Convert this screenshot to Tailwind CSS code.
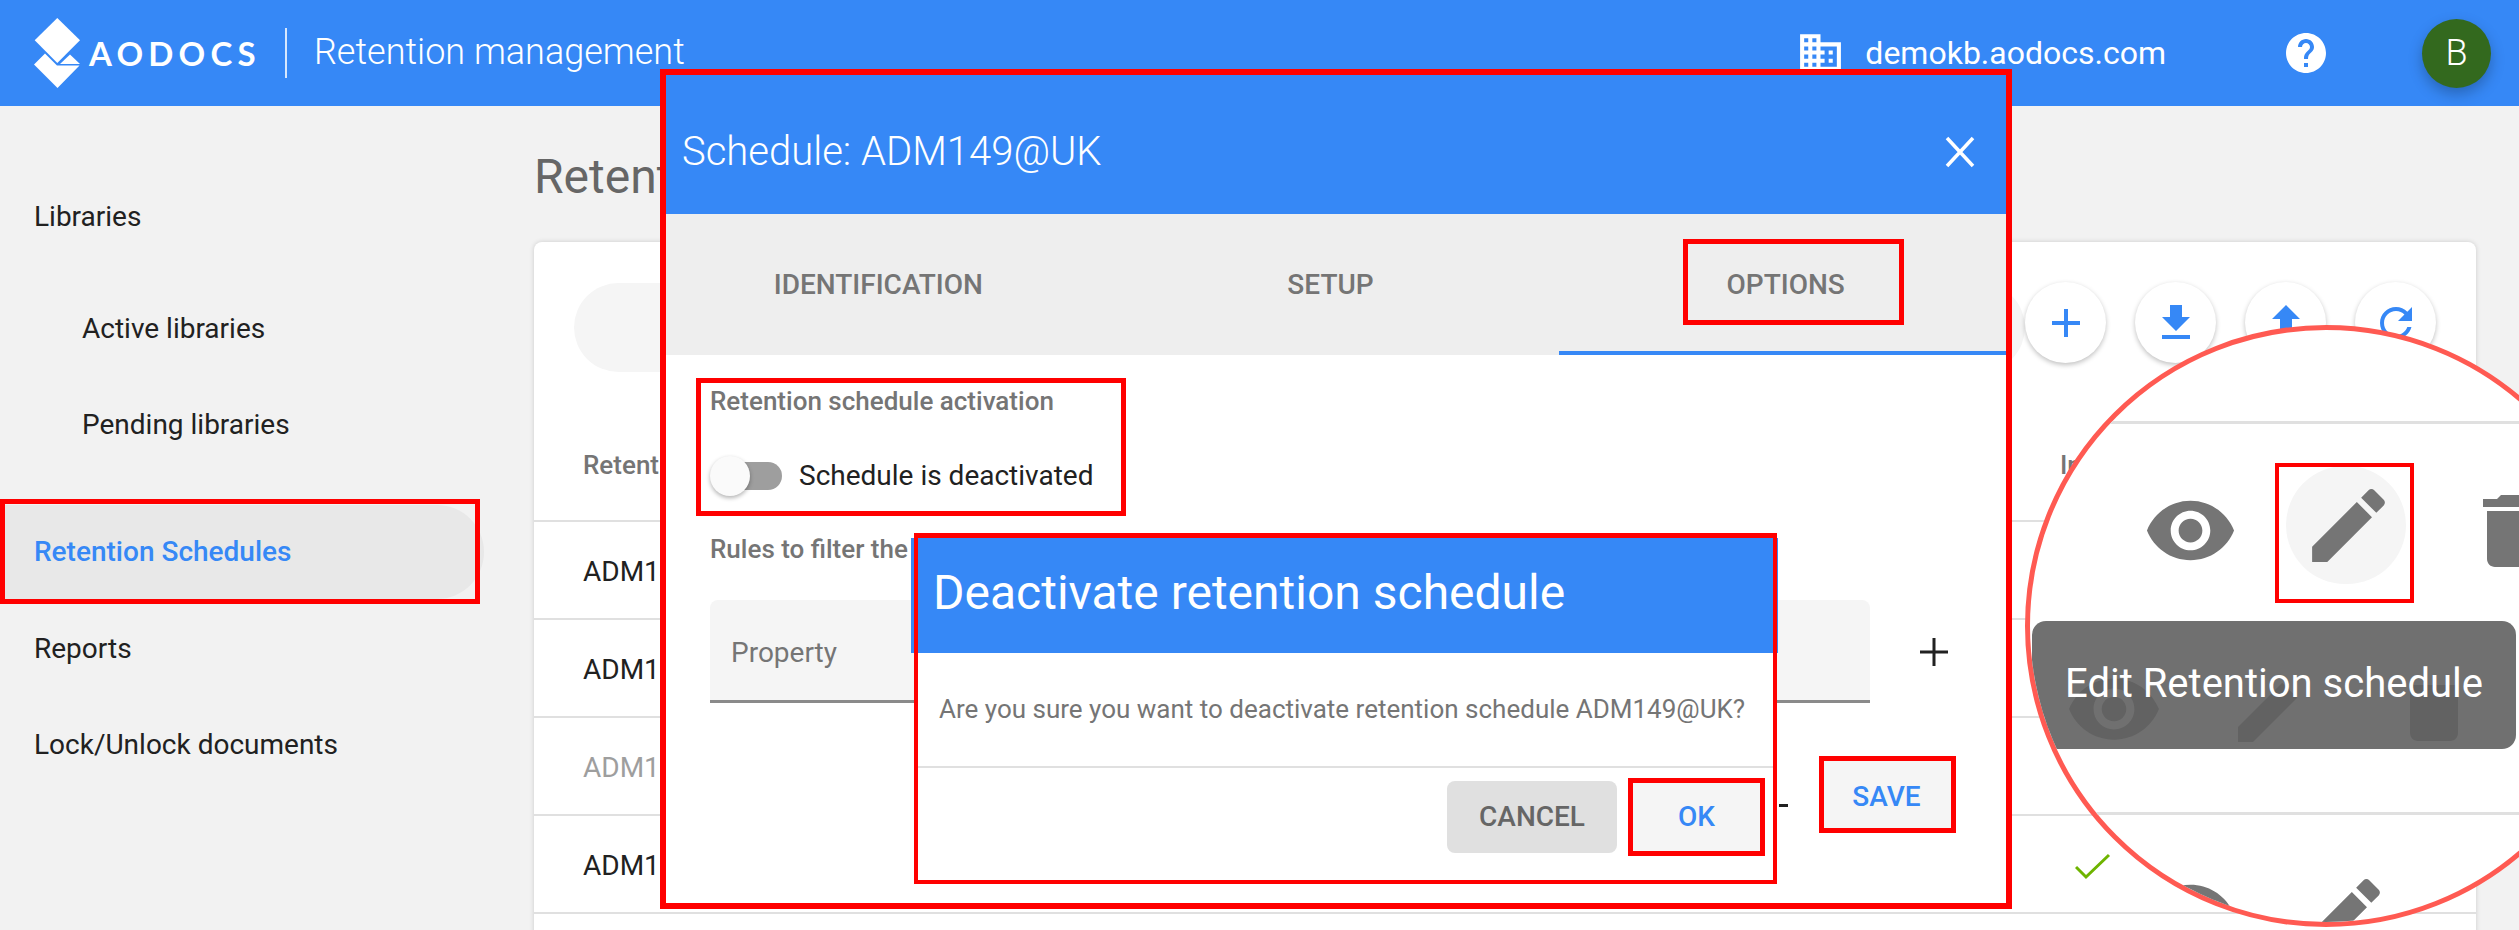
<!DOCTYPE html>
<html lang="en">
<head>
<meta charset="utf-8">
<title>Retention management</title>
<script src="https://cdn.jsdelivr.net/npm/@tailwindcss/browser@4"></script>
</head>
<body class="[font-family:Roboto,sans-serif]">
<div class="relative w-[2519px] h-[930px] overflow-hidden bg-[#f2f2f2] flex flex-col">

  <!-- App bar -->
  <header class="h-[106px] shrink-0 bg-[#3688f6] text-white flex items-center pl-[34px]">
    <svg class="w-[46px] h-[70px] shrink-0" viewBox="34 16 46 70" fill="#fff">
      <polygon points="57.3,16 34.7,38.3 57.3,61 80,38.3"/>
      <polygon points="45,51.5 57,63.5 79.5,63.5 57.5,86 34,62.5"/>
      <polygon points="70,52.5 80,62 60,62"/>
    </svg>
    <span class="ml-[9px] w-[170px] [font-family:Lato,sans-serif] font-bold text-[33px] tracking-[5.2px] leading-none">AODOCS</span>
    <span class="ml-[26px] w-[2px] h-[50px] bg-white/80"></span>
    <span class="ml-[27px] -mt-[3px] text-[36px] font-light leading-none">Retention management</span>
    <svg class="ml-auto w-[49px] h-[49px] -mt-[2px]" viewBox="0 0 24 24" fill="#fff"><path d="M12 7V3H2v18h20V7H12zM6 19H4v-2h2v2zm0-4H4v-2h2v2zm0-4H4V9h2v2zm0-4H4V5h2v2zm4 12H8v-2h2v2zm0-4H8v-2h2v2zm0-4H8V9h2v2zm0-4H8V5h2v2zm10 12h-8v-2h2v-2h-2v-2h2v-2h-2V9h8v10zm-2-8h-2v2h2v-2zm0 4h-2v2h2v-2z"/></svg>
    <span class="ml-[20px] text-[32px] leading-none">demokb.aodocs.com</span>
    <svg class="ml-[116px] w-[48px] h-[48px]" viewBox="0 0 24 24" fill="#fff"><path d="M12 2C6.48 2 2 6.48 2 12s4.48 10 10 10 10-4.48 10-10S17.52 2 12 2zm1 17h-2v-2h2v2zm2.07-7.75l-.9.92C13.45 12.9 13 13.5 13 15h-2v-.5c0-1.1.45-2.1 1.17-2.83l1.24-1.26c.37-.36.59-.86.59-1.41 0-1.1-.9-2-2-2s-2 .9-2 2H8c0-2.21 1.79-4 4-4s4 1.79 4 4c0 .88-.36 1.68-.93 2.25z"/></svg>
    <span class="ml-[92px] mr-[28px] w-[69px] h-[69px] rounded-full bg-[#33691e] flex items-center justify-center text-[36px] font-light shadow-[0_6px_14px_rgba(0,0,0,0.25)]">B</span>
  </header>

  <div class="flex flex-1 min-h-0">
    <!-- Sidebar -->
    <nav class="w-[534px] shrink-0 pt-[63px] text-[28px] text-[#212121]">
      <div class="h-[96px] flex items-center pl-[34px]">Libraries</div>
      <div class="h-[96px] mt-[16px] flex items-center pl-[82px]">Active libraries</div>
      <div class="h-[96px] flex items-center pl-[82px]">Pending libraries</div>
      <div class="h-[94px] w-[484px] mt-[32px] flex items-center pl-[34px] bg-[#e8e8e8] rounded-r-[47px] text-[#3688f6] font-medium">Retention Schedules</div>
      <div class="h-[96px] mt-[2px] flex items-center pl-[34px]">Reports</div>
      <div class="h-[96px] flex items-center pl-[34px]">Lock/Unlock documents</div>
    </nav>

    <!-- Main -->
    <main class="w-[1942px] shrink-0">
      <h1 class="h-[136px] flex items-center pt-[6px] text-[48px] text-[#666666] leading-none">Retention Schedules</h1>
      <section class="bg-white rounded-t-[8px] shadow-[0_0_5px_rgba(0,0,0,0.16)] h-[800px]">
        <div class="h-[198px] relative flex pl-[40px] pt-[41px]">
          <div class="w-[1451px] h-[89px] rounded-full bg-[#f5f5f5]"></div>
          <div class="flex gap-[29px] -mt-[1px]">
            <button class="w-[81px] h-[81px] rounded-full bg-white shadow-[0_2px_5px_rgba(0,0,0,0.25)] flex items-center justify-center"><svg class="w-[48px] h-[48px]" viewBox="0 0 24 24" fill="#3688f6"><path d="M19 13h-6v6h-2v-6H5v-2h6V5h2v6h6v2z"/></svg></button>
            <button class="w-[81px] h-[81px] rounded-full bg-white shadow-[0_2px_5px_rgba(0,0,0,0.25)] flex items-center justify-center"><svg class="w-[48px] h-[48px]" viewBox="0 0 24 24" fill="#3688f6"><path d="M19 9h-4V3H9v6H5l7 7 7-7zM5 18v2h14v-2H5z"/></svg></button>
            <button class="w-[81px] h-[81px] rounded-full bg-white shadow-[0_2px_5px_rgba(0,0,0,0.25)] flex items-center justify-center"><svg class="w-[48px] h-[48px]" viewBox="0 0 24 24" fill="#3688f6"><path d="M9 16h6v-6h4l-7-7-7 7h4v6zm-4 2h14v2H5z"/></svg></button>
            <button class="w-[81px] h-[81px] rounded-full bg-white shadow-[0_2px_5px_rgba(0,0,0,0.25)] flex items-center justify-center"><svg class="w-[48px] h-[48px]" viewBox="0 0 24 24" fill="#3688f6"><path d="M17.65 6.35C16.2 4.9 14.21 4 12 4c-4.42 0-7.99 3.58-7.99 8s3.57 8 7.99 8c3.73 0 6.84-2.55 7.73-6h-2.08c-.82 2.33-3.04 4-5.65 4-3.31 0-6-2.69-6-6s2.69-6 6-6c1.66 0 3.14.69 4.22 1.78L13 11h7V4l-2.35 2.35z"/></svg></button>
          </div>
        </div>
        <div class="h-[82px] flex items-center pl-[49px] pb-[30px] border-b-[2px] border-[#e0e0e0] text-[26px] font-medium text-[#757575]">
          <span class="w-[1477px]">Retention schedule</span><span>In</span>
        </div>
        <div class="h-[98px] flex items-center pl-[49px] pt-[4px] border-b-[2px] border-[#e0e0e0] text-[28px] text-[#212121]">ADM149@UK</div>
        <div class="h-[98px] flex items-center pl-[49px] pt-[4px] border-b-[2px] border-[#e0e0e0] text-[28px] text-[#212121]">ADM150@UK</div>
        <div class="h-[98px] flex items-center pl-[49px] pt-[4px] border-b-[2px] border-[#e0e0e0] text-[28px] text-[#9e9e9e]">ADM151@UK</div>
        <div class="h-[98px] flex items-center pl-[49px] pt-[4px] border-b-[2px] border-[#e0e0e0] text-[28px] text-[#212121]">
          <span class="w-[1492px]">ADM152@UK</span>
          <svg class="w-[36px] h-[27px]" viewBox="0 0 36 27" fill="none" stroke="#6eb400" stroke-width="3"><path d="M1 14l10 10L34 2"/></svg>
        </div>
      </section>
    </main>
  </div>

  <!-- Schedule dialog -->
  <div class="absolute left-[666px] top-[75px] w-[1340px] h-[829px] bg-white flex flex-col">
    <div class="h-[139px] shrink-0 bg-[#3688f6] text-white flex items-center justify-between pl-[16px] pr-[29px] pt-[15px]">
      <span class="text-[40px] font-light leading-none">Schedule: ADM149@UK</span>
      <svg class="w-[34px] h-[34px]" viewBox="0 0 34 34" stroke="#fff" stroke-width="3.5" fill="none"><path d="M4 3l26 28M30 3L4 31"/></svg>
    </div>
    <div class="h-[141px] shrink-0 bg-[#eeeeee] grid grid-cols-3 text-[28px] font-medium text-[#757575]">
      <div class="flex items-center justify-center pr-[22px]">IDENTIFICATION</div>
      <div class="flex items-center justify-center pr-[11px]">SETUP</div>
      <div class="flex items-center justify-center pl-[6px] border-b-[4px] border-[#3688f6] pt-[4px]">OPTIONS</div>
    </div>
    <div class="flex-1 pl-[44px] pt-[31px] relative">
      <div class="h-[30px] flex items-center text-[26px] font-medium text-[#757575]">Retention schedule activation</div>
      <div class="mt-[40px] h-[40px] flex items-center">
        <span class="relative w-[72px] h-[40px] block">
          <span class="absolute left-[29px] top-[6px] w-[43px] h-[28px] rounded-r-full bg-[#9e9e9e]"></span>
          <span class="absolute left-0 top-0 w-[40px] h-[40px] rounded-full bg-[#fafafa] shadow-[0_2px_4px_rgba(0,0,0,0.3)]"></span>
        </span>
        <span class="ml-[17px] text-[28px] text-[#212121]">Schedule is deactivated</span>
      </div>
      <div class="mt-[38px] h-[30px] flex items-center text-[26px] font-medium text-[#757575]">Rules to filter the documents</div>
      <div class="mt-[36px] flex items-center">
        <div class="w-[1160px] h-[103px] bg-[#f5f5f5] rounded-t-[8px] border-b-[3px] border-[#8a8a8a] flex items-center pl-[21px] pt-[5px] text-[28px] text-[#757575]">Property</div>
        <svg class="ml-[48px] w-[32px] h-[32px]" viewBox="0 0 32 32" stroke="#212121" stroke-width="3" fill="none"><path d="M16 2v28M2 16h28"/></svg>
      </div>
      <div class="mt-[57px] flex justify-end pr-[54px]">
        <button class="w-[129px] h-[69px] bg-[#f5f5f5] text-[#3688f6] text-[28px] font-medium pt-[5px] pr-[2px]">SAVE</button>
      </div>
    </div>
  </div>
  <span class="absolute left-[1779px] top-[804px] w-[9px] h-[3px] bg-[#212121]"></span>

  <!-- Confirm dialog -->
  <div class="absolute left-[914px] top-[533px] w-[863px] h-[351px] bg-white flex flex-col pt-[5px]">
    <div class="h-[115px] shrink-0 -ml-[3px] w-[867px] bg-[#3688f6] text-white flex items-center pl-[22px] pb-[6px] text-[48px] leading-none">Deactivate retention schedule</div>
    <div class="h-[115px] shrink-0 flex items-center pl-[25px] border-b-[2px] border-[#e0e0e0] text-[26px] text-[#757575]">Are you sure you want to deactivate retention schedule ADM149@UK?</div>
    <div class="flex justify-end gap-[15px] pr-[16px] pt-[13px] text-[28px] font-medium">
      <button class="w-[170px] h-[72px] rounded-[8px] bg-[#e0e0e0] text-[#666666]">CANCEL</button>
      <button class="w-[129px] h-[72px] bg-[#f5f5f5] text-[#3688f6]">OK</button>
    </div>
  </div>

  <!-- Magnifier -->
  <div class="absolute left-[2025px] top-[325px] w-[602px] h-[602px] rounded-full border-[5px] border-[#ff5a52] bg-white overflow-hidden">
    <div class="absolute left-0 top-[91px] w-full h-[3px] bg-[#e0e0e0]"></div>
    <div class="absolute left-0 top-[482px] w-full h-[3px] bg-[#e0e0e0]"></div>
    <div class="absolute left-[256px] top-[136px] w-[120px] h-[118px] rounded-full bg-[#f5f5f5]"></div>
    <svg class="absolute left-[113px] top-[153px] w-[95px] h-[95px]" viewBox="0 0 24 24" fill="#757575"><path d="M12 4.5C7 4.5 2.73 7.61 1 12c1.73 4.39 6 7.5 11 7.5s9.27-3.11 11-7.5c-1.73-4.39-6-7.5-11-7.5zM12 17c-2.76 0-5-2.24-5-5s2.24-5 5-5 5 2.24 5 5-2.24 5-5 5zm0-8c-1.66 0-3 1.34-3 3s1.34 3 3 3 3-1.34 3-3-1.34-3-3-3z"/></svg>
    <svg class="absolute left-[270px] top-[147px] w-[97px] h-[97px]" viewBox="0 0 24 24" fill="#757575"><path d="M3 17.25V21h3.75L17.81 9.94l-3.75-3.75L3 17.25zM20.71 7.04c.39-.39.39-1.02 0-1.41l-2.34-2.34c-.39-.39-1.02-.39-1.41 0l-1.83 1.83 3.75 3.75 1.83-1.83z"/></svg>
    <svg class="absolute left-[433px] top-[153px] w-[96px] h-[96px]" viewBox="0 0 24 24" fill="#757575"><path d="M6 19c0 1.1.9 2 2 2h8c1.1 0 2-.9 2-2V7H6v12zM19 4h-3.5l-1-1h-5l-1 1H5v2h14V4z"/></svg>
    <svg class="absolute left-[113px] top-[537px] w-[95px] h-[95px]" viewBox="0 0 24 24" fill="#757575"><path d="M12 4.5C7 4.5 2.73 7.61 1 12c1.73 4.39 6 7.5 11 7.5s9.27-3.11 11-7.5c-1.73-4.39-6-7.5-11-7.5zM12 17c-2.76 0-5-2.24-5-5s2.24-5 5-5 5 2.24 5 5-2.24 5-5 5zm0-8c-1.66 0-3 1.34-3 3s1.34 3 3 3 3-1.34 3-3-1.34-3-3-3z"/></svg>
    <svg class="absolute left-[265px] top-[537px] w-[97px] h-[97px]" viewBox="0 0 24 24" fill="#757575"><path d="M3 17.25V21h3.75L17.81 9.94l-3.75-3.75L3 17.25zM20.71 7.04c.39-.39.39-1.02 0-1.41l-2.34-2.34c-.39-.39-1.02-.39-1.41 0l-1.83 1.83 3.75 3.75 1.83-1.83z"/></svg>

    <div class="absolute left-[2px] top-[291px] w-[484px] h-[128px] rounded-[14px] bg-[#707070] flex items-center justify-center text-white text-[40px] overflow-hidden">
      <svg class="absolute left-[33px] top-[39px] w-[98px] h-[98px]" viewBox="0 0 24 24" fill="#626262"><path d="M12 4.5C7 4.5 2.73 7.61 1 12c1.73 4.39 6 7.5 11 7.5s9.27-3.11 11-7.5c-1.73-4.39-6-7.5-11-7.5zM12 17c-2.76 0-5-2.24-5-5s2.24-5 5-5 5 2.24 5 5-2.24 5-5 5zm0-8c-1.66 0-3 1.34-3 3s1.34 3 3 3 3-1.34 3-3-1.34-3-3-3z"/></svg>
      <svg class="absolute left-[194px] top-[37px] w-[96px] h-[96px]" viewBox="0 0 24 24" fill="#626262"><path d="M3 17.25V21h3.75L17.81 9.94l-3.75-3.75L3 17.25z"/></svg>
      <svg class="absolute left-[354px] top-[36px] w-[96px] h-[96px]" viewBox="0 0 24 24" fill="#626262"><path d="M6 19c0 1.1.9 2 2 2h8c1.1 0 2-.9 2-2V7H6v12z"/></svg>
      <span class="relative pb-[2px]">Edit Retention schedule</span>
    </div>
    <div class="absolute left-[245px] top-[133px] w-[139px] h-[140px] border-4 border-[#ff0000]"></div>
  </div>

  <!-- Red annotation frames -->
  <div class="absolute left-[660px] top-[69px] w-[1352px] h-[840px] border-[6px] border-[#ff0000]"></div>
  <div class="absolute left-0 top-[499px] w-[480px] h-[105px] border-[5px] border-[#ff0000]"></div>
  <div class="absolute left-[1683px] top-[239px] w-[221px] h-[86px] border-[5px] border-[#ff0000]"></div>
  <div class="absolute left-[696px] top-[378px] w-[430px] h-[138px] border-[5px] border-[#ff0000]"></div>
  <div class="absolute left-[914px] top-[533px] w-[863px] h-[351px] border-[4px] border-t-[5px] border-[#ff0000]"></div>
  <div class="absolute left-[1628px] top-[778px] w-[137px] h-[78px] border-[5px] border-[#ff0000]"></div>
  <div class="absolute left-[1819px] top-[756px] w-[137px] h-[77px] border-[5px] border-[#ff0000]"></div>
</div>
</body>
</html>
